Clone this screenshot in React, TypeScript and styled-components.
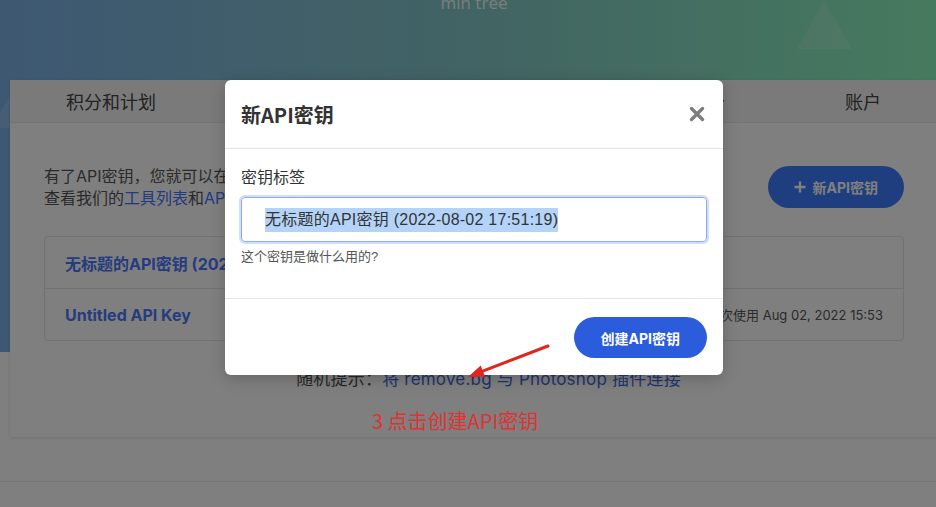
import React from "react";
import styled, { createGlobalStyle } from "styled-components";

const GlobalStyle = createGlobalStyle`
  html, body { margin: 0; padding: 0; }
  body {
    font-family: "Inter", "Noto Sans CJK SC", sans-serif;
    background: #ffffff;
  }
  * { box-sizing: border-box; }
`;

const Page = styled.div`
  position: relative;
  width: 936px;
  height: 507px;
  overflow: hidden;
  background: #ffffff;
`;

const Hero = styled.div`
  position: relative;
  height: 352px;
  background: linear-gradient(90deg, #7cb0e6 0%, #84c8c8 50%, #8cf4bc 100%);
  overflow: hidden;
`;

const HeroTitle = styled.div`
  position: absolute;
  top: -9px;
  left: 0;
  right: 0;
  text-align: center;
  padding-left: 12px;
  font-size: 17px;
  color: rgba(255, 255, 255, 0.95);
  font-family: "Open Sans", "Noto Sans CJK SC", sans-serif;
`;

const Deco = styled.svg`
  position: absolute;
  overflow: visible;
`;

const Card = styled.section`
  position: relative;
  margin: -272px 0 0 10px;
  height: 357px;
  background: #ffffff;
  box-shadow: 0 1px 3px rgba(0, 0, 0, 0.12);
`;

const Tabs = styled.nav`
  display: flex;
  justify-content: space-between;
  align-items: center;
  height: 43px;
  padding: 0 55px 0 56px;
  background: #f4f4f4;
  border-bottom: 1px solid #e8e8e8;
`;

const Tab = styled.span`
  font-family: "Noto Sans CJK SC", sans-serif;
  font-size: 18px;
  color: #444444;
`;

const Content = styled.div`
  padding: 42px 32px 0 34px;
`;

const IntroRow = styled.div`
  display: flex;
  justify-content: space-between;
  align-items: flex-start;
`;

const Intro = styled.p`
  margin: 0;
  font-size: 16px;
  line-height: 22px;
  color: #555555;
`;

const Link = styled.a`
  color: #4674fc;
  text-decoration: none;
`;

const PrimaryButton = styled.button<{ $tone: "page" | "modal" }>`
  display: inline-flex;
  align-items: center;
  justify-content: center;
  gap: 7px;
  height: ${(p) => (p.$tone === "page" ? "42px" : "41px")};
  padding: 0 ${(p) => (p.$tone === "page" ? "26px" : "27px")};
  margin-top: 1px;
  border: none;
  border-radius: 21px;
  background: ${(p) => (p.$tone === "page" ? "#3e7cff" : "#2b5cdb")};
  color: #ffffff;
  font-family: "Inter", "Noto Sans CJK SC", sans-serif;
  font-size: 14px;
  font-weight: 700;
  cursor: pointer;
`;

const KeyList = styled.div`
  margin-top: 27px;
  border: 1px solid #e4e4e4;
  border-radius: 4px;
`;

const KeyRow = styled.div<{ $first?: boolean }>`
  display: flex;
  justify-content: space-between;
  align-items: center;
  height: ${(p) => (p.$first ? "51px" : "52px")};
  padding: 0 20px 0 20px;
  border-top: ${(p) => (p.$first ? "none" : "1px solid #e4e4e4")};
`;

const KeyName = styled.span`
  font-size: 16px;
  font-weight: 700;
  color: #4c78fc;
`;

const KeyMeta = styled.span`
  font-size: 13px;
  color: #565656;
`;

const Tip = styled.p`
  margin: 27px 0 0;
  padding-left: 29px;
  text-align: center;
  font-size: 17px;
  letter-spacing: 0.2px;
  line-height: 22px;
  color: #505050;
`;

const TipLink = styled.a`
  color: #4468de;
  text-decoration: none;
`;

const BottomBand = styled.div`
  margin-top: 44px;
  height: 30px;
  border-top: 1px solid #eeeeee;
`;

/* Modal backdrop: dims the page, holds the dialog */
const Overlay = styled.div`
  position: absolute;
  top: 0;
  left: 0;
  right: 0;
  bottom: 0;
  z-index: 10;
  background-color: rgba(0, 0, 0, 0.5);
  padding: 80px 0 0 225px;
`;

const Modal = styled.div`
  width: 498px;
  background: #ffffff;
  border-radius: 6px;
  box-shadow: 0 4px 16px rgba(0, 0, 0, 0.2);
  font-family: "Liberation Sans", "Noto Sans CJK SC", sans-serif;
`;

const ModalHeader = styled.header`
  display: flex;
  align-items: center;
  justify-content: space-between;
  height: 69px;
  padding: 0 17px 0 16px;
  border-bottom: 1px solid #e5e5e5;
`;

const ModalTitle = styled.h2`
  margin: 0;
  font-family: "Noto Sans CJK SC", sans-serif;
  font-size: 20px;
  font-weight: 700;
  color: #333333;
`;

const CloseButton = styled.button`
  display: flex;
  align-items: center;
  justify-content: center;
  width: 18px;
  height: 18px;
  padding: 0;
  border: none;
  background: transparent;
  cursor: pointer;
`;

const ModalBody = styled.div`
  padding: 19px 16px 33px;
`;

const Label = styled.div`
  font-size: 16px;
  line-height: 20px;
  color: #333333;
`;

const InputBox = styled.div`
  display: flex;
  align-items: center;
  height: 45px;
  margin-top: 9px;
  padding-left: 23px;
  border: 1px solid #8eaaf0;
  border-radius: 4px;
  box-shadow: 0 0 0 2px rgba(120, 160, 240, 0.35);
  font-size: 16px;
  letter-spacing: 0.25px;
  color: #333333;
`;

const Selected = styled.span`
  background: #b4d3f8;
  line-height: 24px;
`;

const Help = styled.div`
  margin-top: 7px;
  font-size: 13px;
  line-height: 16px;
  color: #555555;
`;

const ModalFooter = styled.footer`
  display: flex;
  justify-content: flex-end;
  padding: 17px 16px;
  border-top: 1px solid #e5e5e5;
`;

const Annotation = styled.div`
  position: absolute;
  z-index: 20;
  left: 372px;
  top: 407px;
  font-family: "Noto Sans CJK SC", sans-serif;
  font-size: 20px;
  line-height: 28px;
  color: #e03232;
`;

const ArrowSvg = styled.svg`
  position: absolute;
  z-index: 20;
  left: 460px;
  top: 340px;
`;

export default function App() {
  return (
    <>
      <GlobalStyle />
      <Page>
        <Hero>
          <HeroTitle>min tree</HeroTitle>
          <Deco style={{ left: 796, top: 0 }} width="57" height="50" viewBox="0 0 57 50">
            <polygon points="28,0 56,49 1,49" fill="rgba(255,255,255,0.16)" />
          </Deco>
          <Deco style={{ left: -30, top: 96 }} width="40" height="40" viewBox="0 0 40 40">
            <polygon points="40,0 40,32 22,32" fill="rgba(255,255,255,0.14)" />
          </Deco>
        </Hero>
        <Card>
          <Tabs>
            <Tab>积分和计划</Tab>
            <Tab>API密钥</Tab>
            <Tab>工具</Tab>
            <Tab>免费获取积分</Tab>
            <Tab>账户</Tab>
          </Tabs>
          <Content>
            <IntroRow>
              <Intro>
                有了API密钥，您就可以在自己的应用中使用 remove.bg。
                <br />
                查看我们的<Link href="#">工具列表</Link>和<Link href="#">API文档</Link>了解更多。
              </Intro>
              <PrimaryButton $tone="page">
                <svg width="12" height="12" viewBox="0 0 12 12">
                  <path d="M6 0.5v11M0.5 6h11" stroke="#fff" strokeWidth="2.4" />
                </svg>
                新API密钥
              </PrimaryButton>
            </IntroRow>
            <KeyList>
              <KeyRow $first>
                <KeyName>无标题的API密钥 (2022-08-02 17:51:19)</KeyName>
              </KeyRow>
              <KeyRow>
                <KeyName>Untitled API Key</KeyName>
                <KeyMeta>上次使用 Aug 02, 2022 15:53</KeyMeta>
              </KeyRow>
            </KeyList>
            <Tip>
              随机提示：<TipLink href="#">将 remove.bg 与 Photoshop 插件连接</TipLink>
            </Tip>
          </Content>
        </Card>
        <BottomBand />
        <Overlay>
          <Modal role="dialog">
            <ModalHeader>
              <ModalTitle>新API密钥</ModalTitle>
              <CloseButton aria-label="关闭">
                <svg width="16" height="16" viewBox="0 0 16 16">
                  <path d="M2.5 2.5L13.5 13.5M13.5 2.5L2.5 13.5" stroke="#7d7d7d" strokeWidth="3.4" strokeLinecap="round" />
                </svg>
              </CloseButton>
            </ModalHeader>
            <ModalBody>
              <Label>密钥标签</Label>
              <InputBox>
                <Selected>无标题的API密钥 (2022-08-02 17:51:19)</Selected>
              </InputBox>
              <Help>这个密钥是做什么用的?</Help>
            </ModalBody>
            <ModalFooter>
              <PrimaryButton $tone="modal">创建API密钥</PrimaryButton>
            </ModalFooter>
          </Modal>
        </Overlay>
        <ArrowSvg width="95" height="45" viewBox="0 0 95 45">
          <line x1="88" y1="6" x2="22" y2="31.4" stroke="#e0261e" strokeWidth="3" strokeLinecap="round" />
          <polygon points="8,37 25.1,36.8 20.7,25.6" fill="#e0261e" />
        </ArrowSvg>
        <Annotation>3 点击创建API密钥</Annotation>
      </Page>
    </>
  );
}
